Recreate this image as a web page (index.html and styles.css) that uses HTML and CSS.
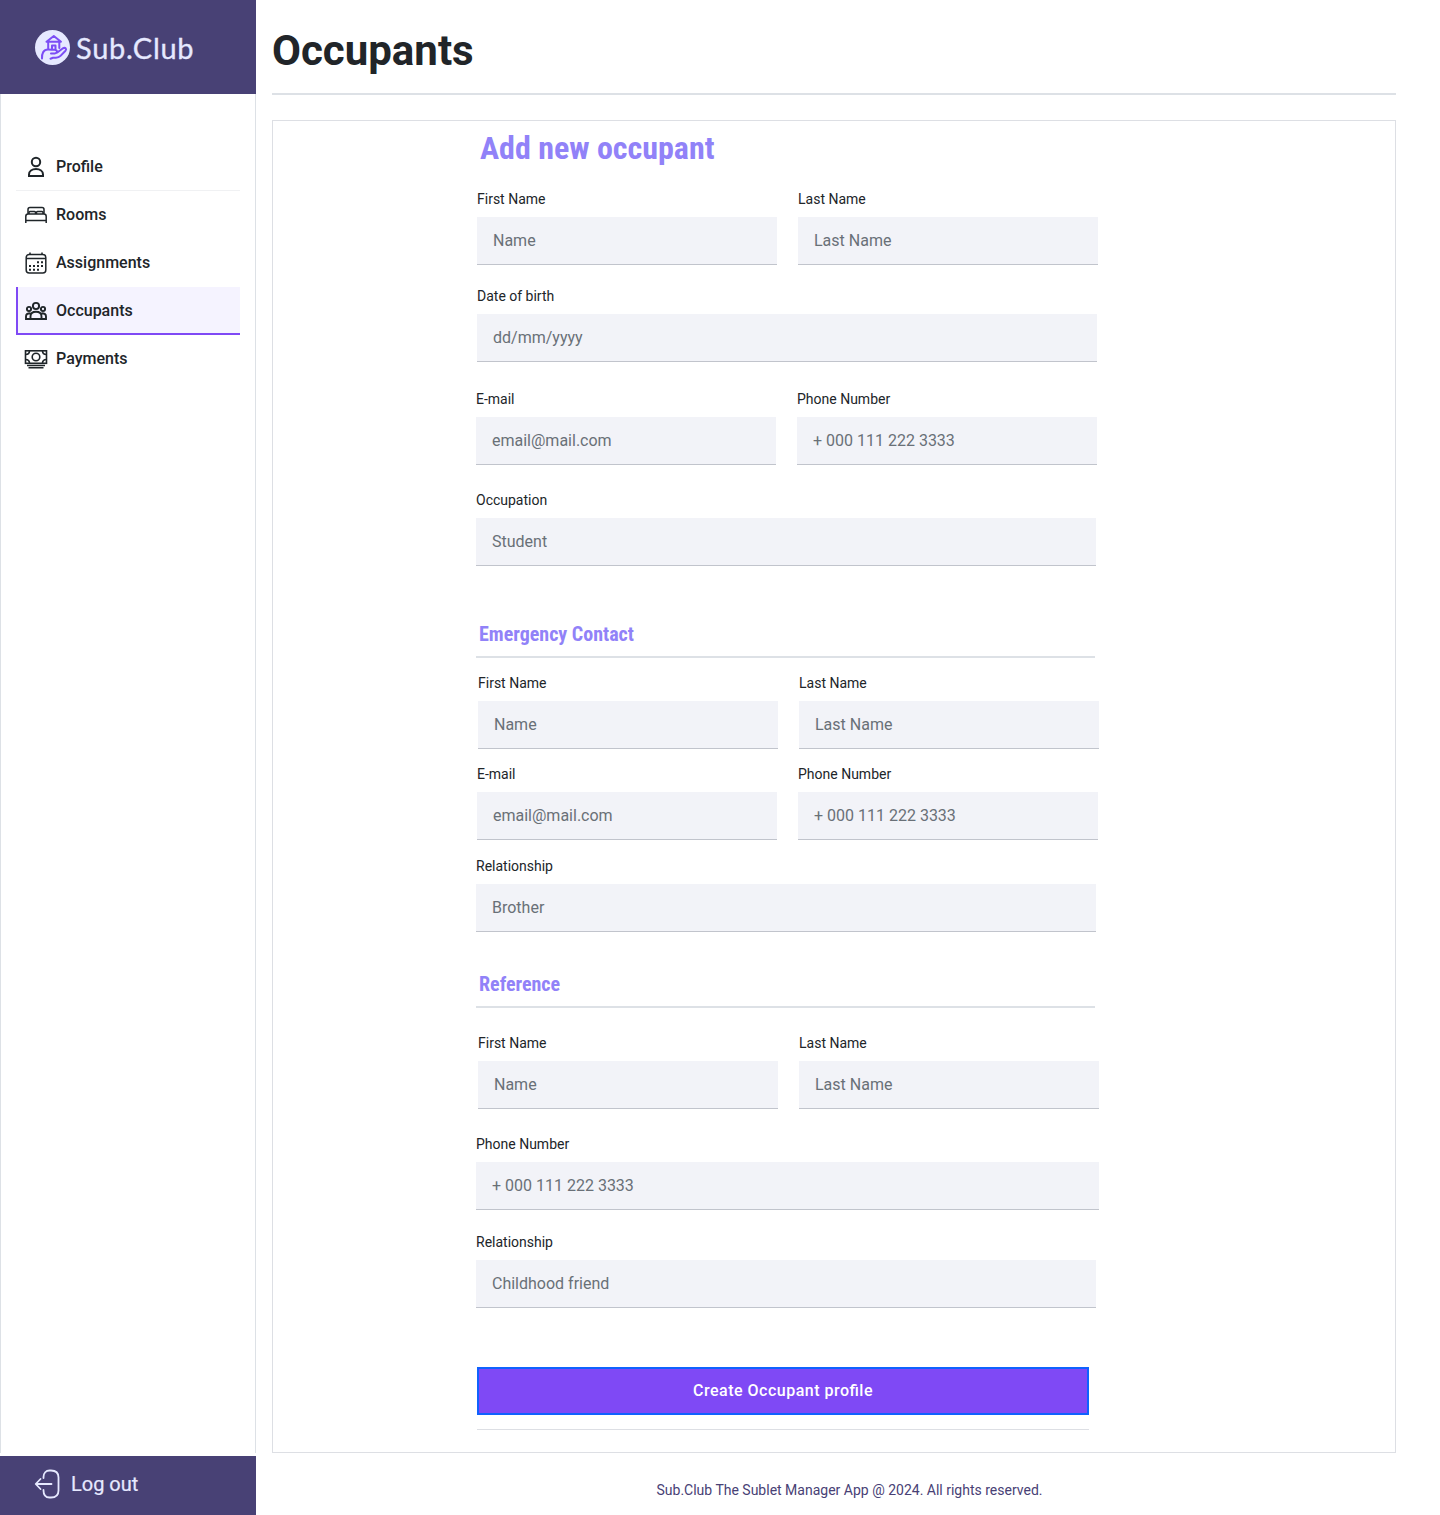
FILE: index.html
```html
<!DOCTYPE html>
<html lang="en">
<head>
<meta charset="utf-8">
<title>Sub.Club - Occupants</title>
<link rel="stylesheet" href="styles.css">
</head>
<body>
<div class="app">
  <aside class="sidebar">
    <div class="brand">
      <svg class="brand-mark" width="37" height="36" viewBox="0 0 37 36" fill="none">
        <circle cx="18.500" cy="18.500" r="17.5" fill="#e6e9ff"/>
        <g stroke="#7c4df5" stroke-width="2" stroke-linecap="round" stroke-linejoin="round">
          <path d="M12.500 12.700 19.800 7l7.200 5.700zM14.200 13v6.500M25.300 13v6"/>
          <path d="M18 19.500V16.500h3.500v3"/>
          <path d="M8 29.500c-.3-5 1.500-9 6-9 3 0 4.500.3 6.500.3 3 0 3.500 3.600.2 3.600H17M23.300 23.500l5.700-4.300c2.500-1 4 .8 2.500 2.500l-5 5.200c-1.500 1.500-2.500 1.800-4.500 1.800h-3l-2.500 1"/>
        </g>
      </svg>
      <span class="brand-name">Sub.Club</span>
    </div>
    <nav class="menu">
      <a class="menu-item divided">
        <svg width="24" height="24" viewBox="0 0 24 24" fill="none" stroke="#1f2529" stroke-width="2"><circle cx="12" cy="7" r="4.200"/><path d="M5 21v-1.500c0-3.500 3-5.500 7-5.500s7 2 7 5.500V21z"/></svg>
        <span>Profile</span></a>
      <a class="menu-item">
        <svg width="24" height="24" viewBox="0 0 24 24" fill="none" stroke="#1f2529" stroke-width="1.500"><path d="M4 11V6.500c0-1.300.7-2 2-2h12c1.300 0 2 .7 2 2V11M1.800 20v-6.500c0-1.500.9-2.500 2.200-2.500h16c1.300 0 2.200 1 2.200 2.500V20M1.800 17.500h20.400"/><path d="M5 11V9.500c0-.6.4-1 1-1h4.500c.6 0 1 .4 1 1V11M12.500 11V9.500c0-.6.4-1 1-1H18c.6 0 1 .4 1 1V11"/></svg>
        <span>Rooms</span></a>
      <a class="menu-item">
        <svg width="24" height="24" viewBox="0 0 24 24" fill="none" stroke="#1f2529" stroke-width="1.500"><rect x="2.200" y="3.500" width="19.600" height="18.500" rx="3"/><path d="M2.200 7.500h19.600M6 1.500v2M18 1.500v2"/><path stroke-width="2" d="M13 11.200h2M17 11.200h2M5 15h2M9 15h2M13 15h2M17 15h2M5 18.700h2M9 18.700h2M13 18.700h2"/></svg>
        <span>Assignments</span></a>
      <a class="menu-item active">
        <svg width="24" height="24" viewBox="0 0 24 24" fill="none" stroke="#1f2529" stroke-width="1.900"><circle cx="12" cy="7" r="3.100"/><circle cx="5" cy="10" r="2.100"/><circle cx="19" cy="10" r="2.100"/><path d="M6.500 20v-2.500c0-3 2.300-4.700 5.500-4.700s5.500 1.700 5.500 4.700V20zM6.500 20H2v-2.500c0-2 1.400-3.200 4.500-3.200M17.500 20H22v-2.500c0-2-1.400-3.200-4.500-3.200"/></svg>
        <span>Occupants</span></a>
      <a class="menu-item">
        <svg width="24" height="24" viewBox="0 0 24 24" fill="none" stroke="#1f2529" stroke-width="1.600"><rect x="1.500" y="3.800" width="21" height="12.500"/><circle cx="12" cy="10" r="3.800"/><path d="M1.500 7.500c2.500 0 4-1.500 4-3.700M22.500 7.500c-2.500 0-4-1.500-4-3.700M1.500 12.500c2.500 0 4 1.500 4 3.800M22.500 12.500c-2.500 0-4 1.500-4 3.800"/><path d="M3 18.500h18M4.500 20.700h15"/></svg>
        <span>Payments</span></a>
    </nav>
    <div class="logout">
      <svg width="26" height="30" viewBox="-.5 0 26 30" fill="none" stroke="#e6e9ff" stroke-width="1.800" stroke-linecap="round" stroke-linejoin="round"><path d="M9 9V8c0-4 2.500-6.500 6-6.500h1.500c4.500 0 7.500 2.500 7.500 7v13c0 4.500-3 7-7.500 7H15c-3.500 0-6-2.500-6-7v-.5M17 15H1.500M6 10l-4.800 5L6 20"/></svg>
      <span>Log out</span>
    </div>
  </aside>
  <main class="main">
    <h1 class="title">Occupants</h1>
    <form class="panel">
      <h2 class="form-title">Add new occupant</h2>
      <div class="row shift-1">
        <label class="field">First Name<input placeholder="Name"></label>
        <label class="field">Last Name<input placeholder="Last Name"></label>
      </div>
      <div class="row shift-1 gap-s">
        <label class="field wide">Date of birth<input placeholder="dd/mm/yyyy"></label>
      </div>
      <div class="row gap-l">
        <label class="field">E-mail<input placeholder="email@mail.com"></label>
        <label class="field">Phone Number<input placeholder="+ 000 111 222 3333"></label>
      </div>
      <div class="row gap-m">
        <label class="field wide">Occupation<input placeholder="Student"></label>
      </div>
      <h3 class="section emergency">Emergency Contact</h3>
      <div class="row shift-2 after-rule">
        <label class="field">First Name<input placeholder="Name"></label>
        <label class="field">Last Name<input placeholder="Last Name"></label>
      </div>
      <div class="row shift-1 gap-xs">
        <label class="field">E-mail<input placeholder="email@mail.com"></label>
        <label class="field">Phone Number<input placeholder="+ 000 111 222 3333"></label>
      </div>
      <div class="row gap-18">
        <label class="field wide">Relationship<input placeholder="Brother"></label>
      </div>
      <h3 class="section reference">Reference</h3>
      <div class="row shift-2 gap-m">
        <label class="field">First Name<input placeholder="Name"></label>
        <label class="field">Last Name<input placeholder="Last Name"></label>
      </div>
      <div class="row gap-m">
        <label class="field full">Phone Number<input placeholder="+ 000 111 222 3333"></label>
      </div>
      <div class="row gap-24">
        <label class="field wide">Relationship<input placeholder="Childhood friend"></label>
      </div>
      <div class="actions">
        <button class="submit" type="button">Create Occupant profile</button>
      </div>
    </form>
    <footer class="footer">Sub.Club The Sublet Manager App @ 2024. All rights reserved.</footer>
  </main>
</div>
</body>
</html>
```
FILE: styles.css
```css
* { box-sizing: border-box; }
body { margin: 0; background: #fff; color: #212529; font-family: Roboto, "Liberation Sans", sans-serif; }
h1, h2, h3 { margin: 0; }
.app { display: flex; height: 1515px; overflow: hidden; }

.sidebar { width: 256px; display: flex; flex-direction: column; flex: none; }
.brand { height: 94px; background: #484175; display: flex; align-items: center; padding: 0 0 0 34px; gap: 5px; }
.brand-name { color: #e6e9ff; font: 400 29px/36px Lato, sans-serif; letter-spacing: .7px; -webkit-text-stroke: .3px #e6e9ff; padding-top: 2px; }
.menu { height: 1359px; border: solid #dde1e6; border-width: 0 1px; padding: 49px 15px 0; }
.menu-item { display: flex; align-items: center; gap: 8px; height: 48px; padding: 0 0 1px 8px; font-size: 16px; font-weight: 500; }
.menu-item svg { margin-top: 1px; }
.divided { border-bottom: 1px solid #f0f1f3; padding-bottom: 0; }
.divided svg { margin-top: 0; }
.active { background: #f5f3ff; border-left: 2px solid #7f49f5; border-bottom: 2px solid #7f49f5; padding: 0 0 0 6px; }
.logout { margin-top: 3px; height: 59px; background: #484175; color: #e6e9ff; display: flex; align-items: center; gap: 11px; padding: 0 0 3px 34px; font-size: 20px; -webkit-text-stroke: .2px #e6e9ff; }

.main { flex: none; width: 1124px; margin-left: 16px; }
.title { height: 95px; border-bottom: 2px solid #dde1e6; font-size: 42px; font-weight: 700; line-height: 50px; padding-top: 26px; }
.panel { margin-top: 25px; height: 1333px; border: 1px solid #dddfe4; padding-left: 203px; display: flex; flex-direction: column; align-items: flex-start; }
.form-title { margin: 7px 0 22px 4px; height: 41px; line-height: 41px; font-size: 32px; font-family: "Roboto Condensed", Roboto, sans-serif; font-stretch: condensed; color: #9182f8; }
.row { display: flex; gap: 21px; }
.shift-1 { margin-left: 1px; }
.shift-2 { margin-left: 2px; }
.gap-xs, .after-rule { margin-top: 17px; }
.gap-18 { margin-top: 18px; }
.gap-s { margin-top: 23px; }
.gap-24 { margin-top: 24px; }
.gap-m { margin-top: 27px; }
.gap-l { margin-top: 29px; }
.field { width: 300px; display: flex; flex-direction: column; gap: 10px; font-size: 14px; line-height: 16px; }
.wide { width: 620px; }
.full { width: 623px; }
.field input { height: 48px; border: 0; border-bottom: 1px solid #c1c4cc; border-radius: 0; background: #f2f3f8; padding: 0 16px; font: 400 16px Roboto, sans-serif; color: #212529; }
.field input::placeholder { color: #697077; opacity: 1; }
.section { width: 619px; height: 36px; padding-left: 3px; border-bottom: 2px solid #dde1e6; line-height: 24px; font-size: 20px; font-family: "Roboto Condensed", Roboto, sans-serif; font-stretch: condensed; color: #9182f8; }
.emergency { margin-top: 56px; }
.reference { margin-top: 40px; }
.actions { width: 612px; height: 63px; margin: 59px 0 0 1px; border-bottom: 1px solid #dddfe4; }
.submit { width: 100%; height: 48px; border: 2px solid #0f62fe; background: #7f49f5; color: #fff; font: 500 16px Roboto, sans-serif; letter-spacing: .5px; font-feature-settings: "liga" 1; padding: 0 0 2px; display: block; }
.footer { margin: 29px 0 0 31px; text-align: center; font-size: 14px; line-height: 16px; color: #484175; }
```
